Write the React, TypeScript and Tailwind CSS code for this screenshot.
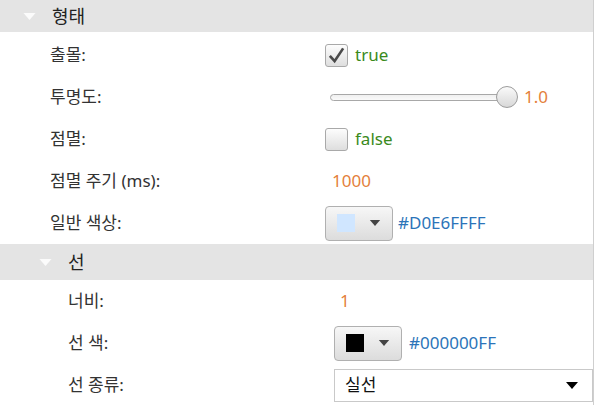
import type { ReactNode } from "react"

const font = { fontFamily: '"Noto Sans", "Noto Sans CJK KR", sans-serif' }

function Caret({ className }: { className: string }) {
  return (
    <svg viewBox="0 0 12 7" className={className}>
      <path d="M0 0 L12 0 L6 7 Z" fill="currentColor" />
    </svg>
  )
}

function GroupHeader({ title, indent, h }: { title: string; indent: number; h: string }) {
  return (
    <div className={`flex items-center bg-[#e4e4e4] ${h}`}>
      <div style={{ width: indent }} className="flex justify-end pr-[16px]">
        <Caret className="h-[7px] w-[13px] text-[#fbfbfb]" />
      </div>
      <span className="text-[18px] leading-none text-[#222]">{title}</span>
    </div>
  )
}

function Row({
  label,
  nested,
  children,
}: {
  label: string
  nested?: boolean
  children: ReactNode
}) {
  return (
    <div
      className={`grid h-[42px] items-center ${
        nested ? "grid-cols-[266px_1fr] pl-[68px]" : "grid-cols-[275px_1fr] pl-[50px]"
      }`}
    >
      <span className="text-[17px] text-[#333]">{label}</span>
      <div className="flex items-center">{children}</div>
    </div>
  )
}

function Checkbox({ checked }: { checked: boolean }) {
  return (
    <div className="flex h-[23px] w-[23px] items-center justify-center rounded-[3px] border border-[#a9a9a9] bg-gradient-to-b from-[#fdfdfd] to-[#dedede]">
      {checked && (
        <svg viewBox="0 0 20 20" className="h-[19px] w-[19px]">
          <path
            d="M3 10.5 L8 16 L17 2.5"
            fill="none"
            stroke="#4a4a4a"
            strokeWidth="2.8"
            strokeLinejoin="miter"
          />
        </svg>
      )}
    </div>
  )
}

function ColorButton({ color }: { color: string }) {
  return (
    <div className="flex h-[35px] w-[68px] items-center rounded-[4px] border border-[#b0b0b0] bg-gradient-to-b from-[#f7f7f7] to-[#dcdcdc] pl-[11px]">
      <div className="h-[18px] w-[18px]" style={{ background: color }} />
      <Caret className="ml-[14px] h-[6px] w-[12px] text-[#444]" />
    </div>
  )
}

export default function App() {
  return (
    <div
      style={font}
      className="h-[405px] w-[594px] overflow-hidden border-r border-[#cfcfcf] bg-white"
    >
      <GroupHeader title="형태" indent={52} h="h-[32px]" />
      <div className="pt-[2px]">
        <Row label="출몰:">
          <Checkbox checked />
          <span className="ml-[7px] text-[17px] text-[#3a8a1c]">true</span>
        </Row>
        <Row label="투명도:">
          <div className="relative ml-[5px] flex h-[22px] w-[188px] items-center">
            <div className="h-[7px] w-[178px] rounded-full border border-[#a8a8a8] bg-gradient-to-b from-[#f0f0f0] to-[#fafafa]" />
            <div className="absolute right-0 top-0 h-[22px] w-[22px] rounded-full border border-[#9c9c9c] bg-gradient-to-b from-[#fafafa] to-[#d8d8d8]" />
          </div>
          <span className="ml-[6px] text-[17px] text-[#e47f3c]">1.0</span>
        </Row>
        <Row label="점멸:">
          <Checkbox checked={false} />
          <span className="ml-[7px] text-[17px] text-[#3a8a1c]">false</span>
        </Row>
        <Row label="점멸 주기 (ms):">
          <span className="pl-[7px] text-[17px] text-[#e47f3c]">1000</span>
        </Row>
        <Row label="일반 색상:">
          <ColorButton color="#D0E6FF" />
          <span className="ml-[5px] text-[17px] text-[#2b74b9]">#D0E6FFFF</span>
        </Row>
      </div>
      <GroupHeader title="선" indent={68} h="h-[36px]" />
      <Row label="너비:" nested>
        <span className="pl-[6px] text-[17px] text-[#e47f3c]">1</span>
      </Row>
      <Row label="선 색:" nested>
        <ColorButton color="#000000" />
        <span className="ml-[7px] text-[17px] text-[#2b74b9]">#000000FF</span>
      </Row>
      <Row label="선 종류:" nested>
        <div className="flex h-[33px] w-[259px] items-center justify-between border border-[#c9c9c9] bg-white pl-[10px] pr-[14px]">
          <span className="text-[17px] text-[#111]">실선</span>
          <Caret className="h-[7px] w-[12px] text-black" />
        </div>
      </Row>
    </div>
  )
}
